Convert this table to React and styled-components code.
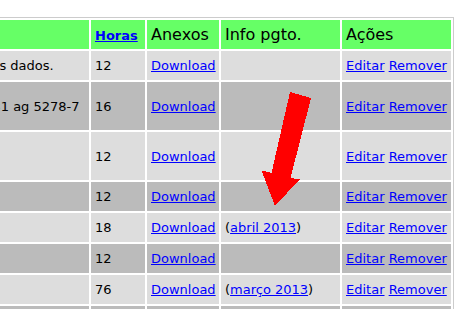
import React from "react";
import styled, { createGlobalStyle } from "styled-components";

const GlobalStyle = createGlobalStyle`
  html, body {
    margin: 0;
    padding: 0;
    overflow: hidden;
    background: #ffffff;
  }
  body {
    font-family: "DejaVu Sans", Verdana, sans-serif;
  }
`;

const Page = styled.div`
  position: relative;
  width: 458px;
  height: 309px;
  overflow: hidden;
`;

const Table = styled.table`
  width: 557px;
  margin: 17px 0 0 -103px;
  table-layout: fixed;
  border-collapse: separate;
  border-spacing: 2px;
  border: 1px solid #cccccc;
  font-size: 13px;
  color: #000000;
`;

const Col = styled.col`
  width: ${(p) => p.$w}px;
`;

const Th = styled.th`
  height: 29px;
  padding: 0 4px;
  background: #66ff66;
  font-weight: normal;
  font-size: 16px;
  text-align: left;
  vertical-align: middle;
  white-space: nowrap;
  overflow: hidden;
`;

const Row = styled.tr`
  & > td {
    background: ${(p) => (p.$dark ? "#bbbbbb" : "#dddddd")};
    height: ${(p) => (p.$tall ? 48 : 29)}px;
  }
`;

const Td = styled.td`
  padding: 0 4px;
  vertical-align: middle;
  white-space: nowrap;
  overflow: hidden;
`;

const Link = styled.a`
  color: #0000ff;
  text-decoration: underline;
  cursor: pointer;
`;

const SortLink = styled(Link)`
  font-weight: bold;
  font-size: 13px;
`;

const Arrow = styled.svg`
  position: absolute;
  left: 0;
  top: 0;
  pointer-events: none;
`;

// linhas da listagem de atividades
const atividades = [
  { desc: "Atualização dos dados.", horas: 12 },
  { desc: "Depósito cc 031 ag 5278-7", horas: 16, tall: true },
  { desc: "Relatório", horas: 12, tall: true },
  { desc: "Reunião", horas: 12 },
  { desc: "Suporte", horas: 18, pgto: "abril 2013" },
  { desc: "Viagem", horas: 12 },
  { desc: "Consultoria", horas: 76, pgto: "março 2013" },
  { desc: "Treinamento", horas: 24 },
];

const App = () => (
  <Page>
    <GlobalStyle />
    <Table>
      <colgroup>
        <Col $w={189} />
        <Col $w={54} />
        <Col $w={72} />
        <Col $w={119} />
        <Col $w={109} />
      </colgroup>
      <thead>
        <tr>
          <Th>Descrição</Th>
          <Th>
            <SortLink href="#">Horas</SortLink>
          </Th>
          <Th>Anexos</Th>
          <Th>Info pgto.</Th>
          <Th>Ações</Th>
        </tr>
      </thead>
      <tbody>
        {atividades.map((a, i) => (
          <Row key={i} $dark={i % 2 === 1} $tall={a.tall}>
            <Td>{a.desc}</Td>
            <Td>{a.horas}</Td>
            <Td>
              <Link href="#">Download</Link>
            </Td>
            <Td>
              {a.pgto && (
                <>
                  (<Link href="#">{a.pgto}</Link>)
                </>
              )}
            </Td>
            <Td>
              <Link href="#">Editar</Link> <Link href="#">Remover</Link>
            </Td>
          </Row>
        ))}
      </tbody>
    </Table>
    <Arrow width="458" height="309" viewBox="0 0 458 309">
      <polygon
        points="290,92 311,98 290.5,178 299.5,179.5 275,206 261.5,170.5 271.5,173"
        fill="#ff0000"
        shapeRendering="crispEdges"
      />
    </Arrow>
  </Page>
);

export default App;
